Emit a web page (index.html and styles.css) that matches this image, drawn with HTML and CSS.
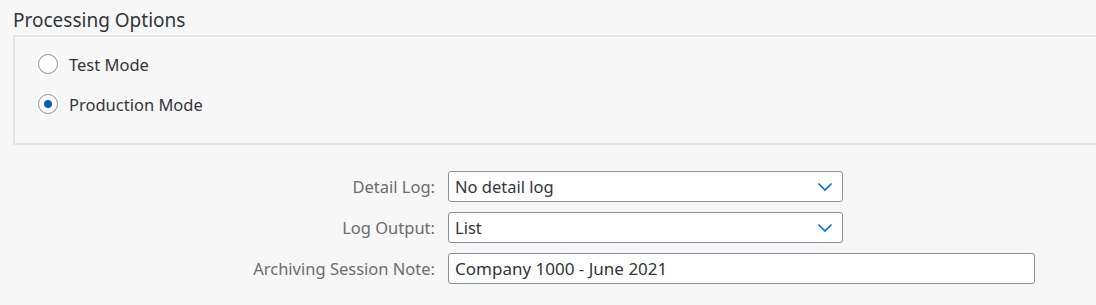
FILE: index.html
```html
<!DOCTYPE html>
<html>
<head lang="en">
    <meta charset="UTF-8">
    <title>Processing Options</title>
    <link rel="stylesheet" href="styles.css">
</head>
<body>

<!--处理选项-->
<h4 class="title">Processing Options</h4>
<div class="panel">
    <label class="radio">
        <span class="dot"></span>
        <span>Test Mode</span>
    </label>
    <label class="radio checked">
        <span class="dot"></span>
        <span>Production Mode</span>
    </label>
</div>

<!--表单区-->
<div class="form">
    <span class="label">Detail Log:</span>
    <div class="field select">
        <span>No detail log</span>
        <svg width="16" height="10" viewBox="0 0 16 10"><path d="M1.5 1.5 L8 8 L14.5 1.5" fill="none" stroke="#0a6ed1" stroke-width="1.6"/></svg>
    </div>

    <span class="label">Log Output:</span>
    <div class="field select">
        <span>List</span>
        <svg width="16" height="10" viewBox="0 0 16 10"><path d="M1.5 1.5 L8 8 L14.5 1.5" fill="none" stroke="#0a6ed1" stroke-width="1.6"/></svg>
    </div>

    <span class="label">Archiving Session Note:</span>
    <div class="field wide">
        <span class="num">Company 1000 - June 2021</span>
    </div>
</div>

</body>
</html>
```

FILE: styles.css
```css
body, h4, div {
    padding: 0;
    margin: 0;
}

body {
    background: #f7f7f7;
    font-family: "Noto Sans", "Liberation Sans", sans-serif;
    color: #32363a;
    overflow: hidden;
}

.title {
    font-weight: normal;
    font-size: 19px;
    line-height: 24px;
    padding: 8px 0 0 13px;
    height: 27px;
}

.panel {
    margin-left: 13px;
    height: 110px;
    border: 2px solid #e4e4e4;
    border-right: none;
    padding-top: 7px;
    box-sizing: border-box;
}

.radio {
    display: flex;
    align-items: center;
    height: 40px;
    padding-left: 23px;
    font-size: 16.5px;
}

.dot {
    width: 20px;
    height: 20px;
    box-sizing: border-box;
    border: 1.5px solid #89919a;
    border-radius: 50%;
    background: #fff;
    margin-right: 11px;
    display: flex;
    align-items: center;
    justify-content: center;
}

.checked .dot::after {
    content: "";
    width: 8px;
    height: 8px;
    border-radius: 50%;
    background: #0a5eb0;
}

/*表单*/
.form {
    display: grid;
    grid-template-columns: 435px auto;
    column-gap: 13px;
    row-gap: 10px;
    padding-top: 26px;
    font-size: 16.5px;
    align-items: center;
}

.label {
    text-align: right;
    color: #6a6d70;
}

.field {
    display: flex;
    align-items: center;
    justify-content: space-between;
    height: 31px;
    box-sizing: border-box;
    padding: 0 9px 0 6px;
    background: #fff;
    border: 1px solid #89919a;
    border-radius: 3px;
}

.num {
    font-size: 17px;
}

.select {
    width: 395px;
}

.wide {
    width: 587px;
}
```
